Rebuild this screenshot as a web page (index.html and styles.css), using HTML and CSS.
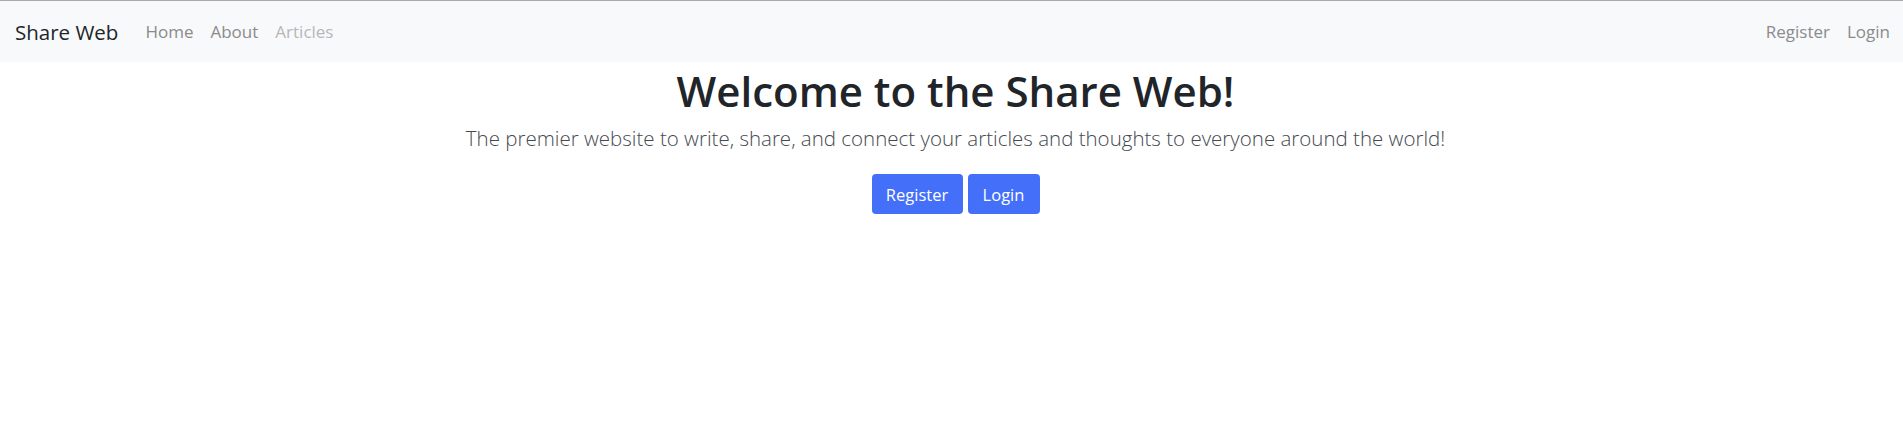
FILE: index.html
```html
<!DOCTYPE html>
<html lang="en">
<head>
<meta charset="utf-8">
<title>Share Web</title>
<link rel="stylesheet" href="styles.css">
</head>
<body>
<nav class="navbar">
  <a class="brand" href="#">Share Web</a>
  <ul class="nav-links">
    <li><a class="nav-link" href="#">Home</a></li>
    <li><a class="nav-link" href="#">About</a></li>
    <li><a class="nav-link disabled" href="#">Articles</a></li>
  </ul>
  <ul class="nav-links nav-right">
    <li><a class="nav-link" href="#">Register</a></li>
    <li><a class="nav-link" href="#">Login</a></li>
  </ul>
</nav>
<main class="hero">
  <h1 class="hero-title">Welcome to the Share Web!</h1>
  <p class="hero-lead">The premier website to write, share, and connect your articles and thoughts to everyone around the world!</p>
  <div class="hero-actions">
    <a class="btn btn-register" href="#">Register</a>
    <a class="btn btn-login" href="#">Login</a>
  </div>
</main>
</body>
</html>
```
FILE: styles.css
```css
* { box-sizing: border-box; }
html, body { margin: 0; padding: 0; background: #fff; }
body {
  font-family: "Open Sans", "Noto Sans", sans-serif;
  color: #212529;
  border-top: 1px solid #a9a9a9;
}
a { text-decoration: none; }
.navbar {
  display: flex;
  align-items: center;
  height: 61px;
  padding: 0 13px 0 15px;
  background: #f8f9fa;
}
.brand {
  font-size: 20.5px;
  color: #212529;
  margin-right: 27px;
  line-height: 30px;
}
.nav-links {
  display: flex;
  list-style: none;
  margin: 0;
  padding: 0;
  gap: 17px;
}
.nav-right { margin-left: auto; gap: 17px; }
.nav-link {
  font-size: 17px;
  line-height: 24px;
  color: #8a8b8c;
  display: block;
}
.nav-link.disabled { color: #b6b7b8; }
.hero {
  text-align: center;
  padding-left: 8px;
}
.hero-title {
  margin: 5px 0 0;
  font-size: 42px;
  font-weight: 600;
  line-height: 48px;
  color: #212529;
}
.hero-lead {
  margin: 9px 0 0;
  font-size: 20.5px;
  font-weight: 300;
  line-height: 28px;
  color: #454a4f;
}
.hero-actions {
  display: flex;
  justify-content: center;
  gap: 5px;
  margin-top: 22px;
}
.btn {
  display: inline-flex;
  align-items: center;
  justify-content: center;
  height: 40px;
  padding: 0 10px;
  border-radius: 4px;
  background: #436ff9;
  color: #fff;
  font-size: 16.5px;
}
.btn-register { width: 91px; }
.btn-login { width: 72px; }
```
